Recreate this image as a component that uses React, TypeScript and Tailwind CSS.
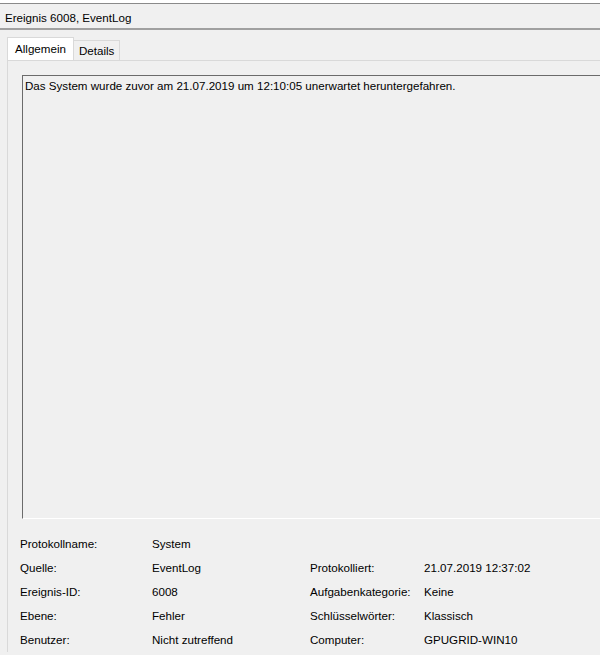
import React from 'react'

const rows: [string, string, string, string][] = [
  ['Protokollname:', 'System', '', ''],
  ['Quelle:', 'EventLog', 'Protokolliert:', '21.07.2019 12:37:02'],
  ['Ereignis-ID:', '6008', 'Aufgabenkategorie:', 'Keine'],
  ['Ebene:', 'Fehler', 'Schlüsselwörter:', 'Klassisch'],
  ['Benutzer:', 'Nicht zutreffend', 'Computer:', 'GPUGRID-WIN10'],
]

export default function App() {
  return (
    <div
      className="w-[600px] h-[655px] overflow-hidden bg-[#f0f0f0] text-[11.6px] text-black"
      style={{ fontFamily: '"Liberation Sans", Arial, sans-serif' }}
    >
      <div className="h-[3px] bg-white" />
      <div className="h-px bg-[#8a8a8a]" />
      <div className="h-[26px] flex items-center pl-[5px] pt-[3px] border-b-2 border-[#a0a0a0]">
        Ereignis 6008, EventLog
      </div>

      <div className="pl-[7px] pt-[7px]">
        <div className="flex items-end">
          <div className="h-[23px] px-[7px] flex items-center bg-white border border-b-0 border-[#d9d9d9]">
            Allgemein
          </div>
          <div className="h-[20px] px-[5px] flex items-center border border-b-0 border-l-0 border-[#d9d9d9]">
            Details
          </div>
        </div>

        <div className="border-t border-l border-[#d9d9d9] pl-[14px] pt-[14px]">
          <div className="w-[600px] h-[444px] border-t border-l border-[#6b6b6b] border-b border-b-white px-[2px] pt-px">
            Das System wurde zuvor am 21.07.2019 um 12:10:05 unerwartet heruntergefahren.
          </div>

          <div className="-ml-[2px] mt-[13px] grid grid-cols-[132px_158px_114px_1fr]">
            {rows.map((r, i) => (
              <React.Fragment key={i}>
                <div className="h-[24px] flex items-center">{r[0]}</div>
                <div className="h-[24px] flex items-center">{r[1]}</div>
                <div className="h-[24px] flex items-center">{r[2]}</div>
                <div className="h-[24px] flex items-center">{r[3]}</div>
              </React.Fragment>
            ))}
          </div>
        </div>
      </div>
    </div>
  )
}
